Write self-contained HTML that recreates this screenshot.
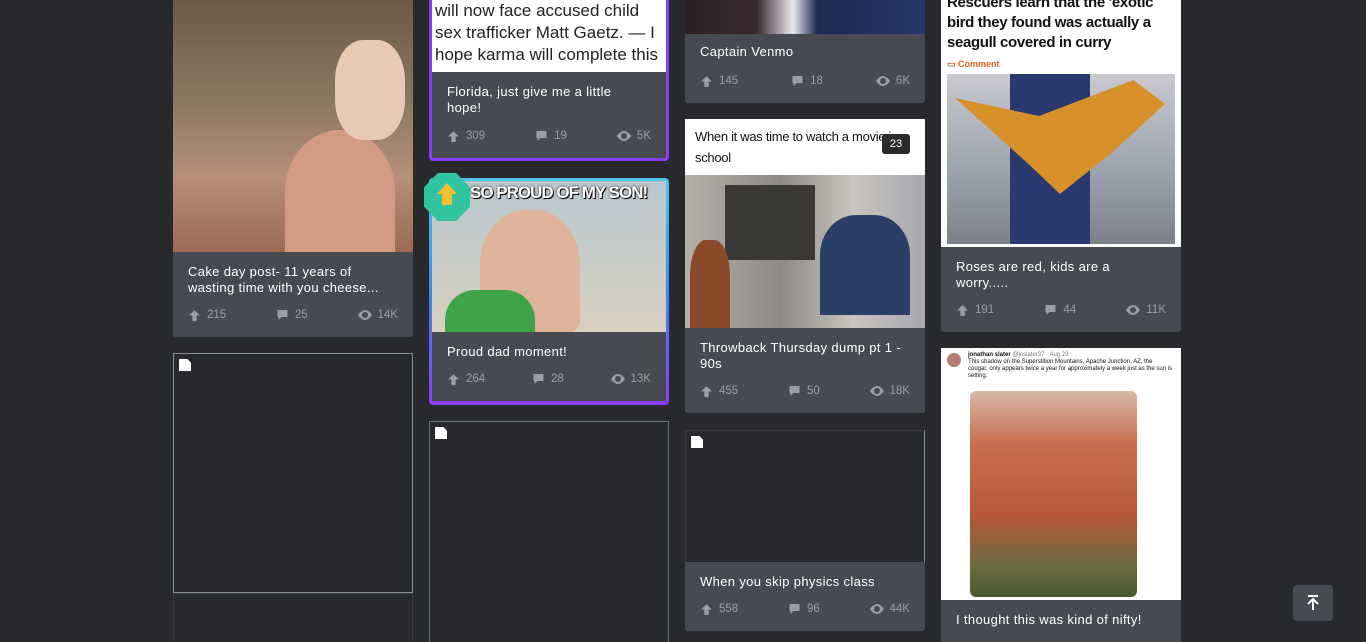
<!DOCTYPE html>
<html style="width:1366px;height:642px;overflow:hidden"><head><meta charset="utf-8"><style>
html,body{margin:0;width:1366px;height:642px;overflow:hidden}
body{background:#27292d;font-family:"Liberation Sans",sans-serif;position:relative}
.a{position:absolute}
.info{position:absolute;background:#474a51;color:#fff;font-size:13px;line-height:16px;box-sizing:border-box;padding:0 15px;letter-spacing:0.35px}
.info .t{position:absolute;left:15px;right:12px;top:12px}
.st{position:absolute;left:15px;right:15px;bottom:15px;height:14px;color:#9a9ea6;font-size:11.5px;display:flex;justify-content:space-between;align-items:center;letter-spacing:0}
.st span{display:flex;align-items:center;gap:6px}
.st svg{fill:#9a9ea6}
.br{position:absolute;box-sizing:border-box;border:1px solid #6c6f75;background:#27292d}
.bi{position:absolute;left:5px;top:5px;width:12px;height:12px;background:#fff;clip-path:polygon(0 0,70% 0,100% 30%,100% 100%,0 100%)}
</style></head><body>
<!-- col1 -->
<div class="a" style="left:173px;top:0;width:240px;height:252px;background:linear-gradient(180deg,#6b5a48 0%,#8a7862 40%,#b88f78 70%,#9a6a55 100%)"></div>
<div class="a" style="left:285px;top:130px;width:110px;height:122px;border-radius:50% 50% 0 0;background:#d39b84"></div>
<div class="a" style="left:335px;top:40px;width:70px;height:100px;background:#e8c9b4;border-radius:40%"></div>
<div class="info" style="left:173px;top:252px;width:240px;height:85px;border-radius:0 0 3px 3px"><div class="t">Cake day post- 11 years of wasting time with you cheese...</div>
<div class="st"><span><svg width="13" height="13" viewBox="0 0 12 12"><path d="M6 1L11 6H8V11H4V6H1Z"/></svg>215</span><span><svg width="13" height="12" viewBox="0 0 12 12"><path d="M1 1H11V8H5L2 11V8H1Z"/></svg>25</span><span><svg width="14" height="10" viewBox="0 0 14 10"><path d="M7 0C3 0 0 5 0 5S3 10 7 10 14 5 14 5 11 0 7 0ZM7 8A3 3 0 1 1 7 2 3 3 0 1 1 7 8Z"/></svg>14K</span></div></div>
<div class="br" style="left:173px;top:353px;width:240px;height:240px;border-color:#8a8d93"><div class="bi"></div></div>
<div class="br" style="left:173px;top:593px;width:240px;height:60px;border-color:#3a3c41"></div>
<!-- col2 -->
<div class="a" style="left:429px;top:-3px;width:240px;height:164px;box-sizing:border-box;border:3px solid #8c3cf5;border-radius:4px;background:#474a51"></div>
<div class="a" style="left:432px;top:0;width:234px;height:72px;background:#fff;color:#222;font-size:17px;line-height:22px;padding-left:3px;box-sizing:border-box">will now face accused child<br>sex trafficker Matt Gaetz. — I<br>hope karma will complete this</div>
<div class="info" style="left:432px;top:72px;width:234px;height:86px;background:transparent"><div class="t" style="top:12px;right:45px">Florida, just give me a little hope!</div>
<div class="st"><span><svg width="13" height="13" viewBox="0 0 12 12"><path d="M6 1L11 6H8V11H4V6H1Z"/></svg>309</span><span><svg width="13" height="12" viewBox="0 0 12 12"><path d="M1 1H11V8H5L2 11V8H1Z"/></svg>19</span><span><svg width="14" height="10" viewBox="0 0 14 10"><path d="M7 0C3 0 0 5 0 5S3 10 7 10 14 5 14 5 11 0 7 0ZM7 8A3 3 0 1 1 7 2 3 3 0 1 1 7 8Z"/></svg>5K</span></div></div>
<div class="a" style="left:429px;top:178px;width:240px;height:227px;border-radius:4px;background:linear-gradient(180deg,#4fc3e8,#3a8af0 50%,#8c3cf5)"></div>
<div class="a" style="left:432px;top:181px;width:234px;height:151px;background:linear-gradient(180deg,#b9c6cf 0%,#c8ccc8 50%,#d8d0c0 100%)"></div>
<div class="a" style="left:480px;top:210px;width:100px;height:122px;border-radius:45% 45% 10% 10%;background:#e0b49a"></div>
<div class="a" style="left:445px;top:290px;width:90px;height:42px;background:#3fa34a;border-radius:30px 30px 0 0"></div>
<div class="a" style="left:470px;top:183px;color:#fff;font-weight:bold;font-size:17px;letter-spacing:-1px;text-shadow:0 0 2px #000,1px 1px 0 #000">SO PROUD OF MY SON!</div>
<div class="a" style="left:424px;top:173px;width:46px;height:48px;background:#30c5a0;clip-path:polygon(30% 0,70% 0,100% 30%,100% 70%,70% 100%,30% 100%,0 70%,0 30%)"></div>
<div class="a" style="left:437px;top:183px;width:20px;height:22px;background:#f5c030;clip-path:polygon(50% 0,100% 50%,75% 50%,75% 100%,25% 100%,25% 50%,0 50%)"></div>
<div class="info" style="left:432px;top:332px;width:234px;height:69px"><div class="t">Proud dad moment!</div>
<div class="st"><span><svg width="13" height="13" viewBox="0 0 12 12"><path d="M6 1L11 6H8V11H4V6H1Z"/></svg>264</span><span><svg width="13" height="12" viewBox="0 0 12 12"><path d="M1 1H11V8H5L2 11V8H1Z"/></svg>28</span><span><svg width="14" height="10" viewBox="0 0 14 10"><path d="M7 0C3 0 0 5 0 5S3 10 7 10 14 5 14 5 11 0 7 0ZM7 8A3 3 0 1 1 7 2 3 3 0 1 1 7 8Z"/></svg>13K</span></div></div>
<div class="br" style="left:429px;top:421px;width:240px;height:240px"><div class="bi"></div></div>
<!-- col3 -->
<div class="a" style="left:685px;top:0;width:240px;height:34px;background:linear-gradient(90deg,#2a2024,#3b2a30 30%,#e8e8ee 45%,#1d2a50 55%,#263768)"></div>
<div class="info" style="left:685px;top:34px;width:240px;height:69px;border-radius:0 0 3px 3px"><div class="t" style="top:10px">Captain Venmo</div>
<div class="st"><span><svg width="13" height="13" viewBox="0 0 12 12"><path d="M6 1L11 6H8V11H4V6H1Z"/></svg>145</span><span><svg width="13" height="12" viewBox="0 0 12 12"><path d="M1 1H11V8H5L2 11V8H1Z"/></svg>18</span><span><svg width="14" height="10" viewBox="0 0 14 10"><path d="M7 0C3 0 0 5 0 5S3 10 7 10 14 5 14 5 11 0 7 0ZM7 8A3 3 0 1 1 7 2 3 3 0 1 1 7 8Z"/></svg>6K</span></div></div>
<div class="a" style="left:685px;top:119px;width:240px;height:56px;background:#fff;color:#111;font-size:13px;line-height:21px;padding:7px 10px;box-sizing:border-box;letter-spacing:-0.3px">When it was time to watch a movie in school</div>
<div class="a" style="left:882px;top:134px;width:28px;height:20px;background:#2b2b2b;color:#fff;font-size:11px;text-align:center;line-height:20px;border-radius:3px">23</div>
<div class="a" style="left:685px;top:175px;width:240px;height:153px;background:linear-gradient(90deg,#b5b0a8,#8c8a86 40%,#c9c4be 70%,#a7a9b0)"></div>
<div class="a" style="left:725px;top:185px;width:90px;height:75px;background:#3a3834"></div>
<div class="a" style="left:690px;top:240px;width:40px;height:88px;background:#8a4a2a;border-radius:40% 40% 0 0"></div>
<div class="a" style="left:820px;top:215px;width:90px;height:100px;background:#2b3f66;border-radius:40% 40% 0 0"></div>
<div class="info" style="left:685px;top:328px;width:240px;height:85px;border-radius:0 0 3px 3px"><div class="t">Throwback Thursday dump pt 1 - 90s</div>
<div class="st"><span><svg width="13" height="13" viewBox="0 0 12 12"><path d="M6 1L11 6H8V11H4V6H1Z"/></svg>455</span><span><svg width="13" height="12" viewBox="0 0 12 12"><path d="M1 1H11V8H5L2 11V8H1Z"/></svg>50</span><span><svg width="14" height="10" viewBox="0 0 14 10"><path d="M7 0C3 0 0 5 0 5S3 10 7 10 14 5 14 5 11 0 7 0ZM7 8A3 3 0 1 1 7 2 3 3 0 1 1 7 8Z"/></svg>18K</span></div></div>
<div class="br" style="left:685px;top:430px;width:240px;height:134px;border-color:#3a3c41;border-right-color:#8a8d93"><div class="bi"></div></div>
<div class="info" style="left:685px;top:562px;width:240px;height:69px;border-radius:0 0 3px 3px"><div class="t">When you skip physics class</div>
<div class="st"><span><svg width="13" height="13" viewBox="0 0 12 12"><path d="M6 1L11 6H8V11H4V6H1Z"/></svg>558</span><span><svg width="13" height="12" viewBox="0 0 12 12"><path d="M1 1H11V8H5L2 11V8H1Z"/></svg>96</span><span><svg width="14" height="10" viewBox="0 0 14 10"><path d="M7 0C3 0 0 5 0 5S3 10 7 10 14 5 14 5 11 0 7 0ZM7 8A3 3 0 1 1 7 2 3 3 0 1 1 7 8Z"/></svg>44K</span></div></div>
<!-- col4 -->
<div class="a" style="left:941px;top:0;width:240px;height:247px;background:#fff"></div>
<div class="a" style="left:947px;top:-7px;width:232px;color:#111;font-weight:bold;font-size:15px;line-height:20px;letter-spacing:-0.35px">Rescuers learn that the 'exotic bird they found was actually a seagull covered in curry</div>
<div class="a" style="left:947px;top:59px;color:#d9641e;font-size:9px;font-weight:bold">▭ Comment</div>
<div class="a" style="left:947px;top:74px;width:228px;height:170px;background:linear-gradient(180deg,#c9c9cf,#9aa1ad 60%,#7c8088)"></div>
<div class="a" style="left:1010px;top:74px;width:80px;height:170px;background:#2a3a6e"></div>
<div class="a" style="left:955px;top:80px;width:210px;height:120px;background:#d8902a;clip-path:polygon(0 15%,40% 30%,85% 0,100% 20%,75% 60%,50% 95%,35% 70%)"></div>
<div class="info" style="left:941px;top:247px;width:240px;height:85px;border-radius:0 0 3px 3px"><div class="t" style="right:70px">Roses are red, kids are a worry.....</div>
<div class="st"><span><svg width="13" height="13" viewBox="0 0 12 12"><path d="M6 1L11 6H8V11H4V6H1Z"/></svg>191</span><span><svg width="13" height="12" viewBox="0 0 12 12"><path d="M1 1H11V8H5L2 11V8H1Z"/></svg>44</span><span><svg width="14" height="10" viewBox="0 0 14 10"><path d="M7 0C3 0 0 5 0 5S3 10 7 10 14 5 14 5 11 0 7 0ZM7 8A3 3 0 1 1 7 2 3 3 0 1 1 7 8Z"/></svg>11K</span></div></div>
<div class="a" style="left:941px;top:348px;width:240px;height:252px;background:#fff"></div>
<div class="a" style="left:947px;top:353px;width:14px;height:14px;border-radius:50%;background:#b08070"></div>
<div class="a" style="left:968px;top:352px;font-size:6px;color:#111;width:205px;line-height:7px"><b>jonathan slater</b> <span style="color:#777">@joslater37 · Aug 23</span><br>This shadow on the Superstition Mountains, Apache Junction, AZ, the cougar, only appears twice a year for approximately a week just as the sun is setting.</div>
<div class="a" style="left:970px;top:391px;width:167px;height:206px;border-radius:6px;background:linear-gradient(180deg,#d8b8a8 0%,#c87050 25%,#b85838 60%,#6a6a40 85%,#4a5a30)"></div>
<div class="info" style="left:941px;top:600px;width:240px;height:42px"><div class="t">I thought this was kind of nifty!</div></div>
<div class="a" style="left:1293px;top:585px;width:40px;height:36px;background:#474a51;border-radius:4px"><svg width="40" height="36" viewBox="0 0 40 36"><path d="M15 11H25M20 25V15M15 19L20 14 25 19" stroke="#fff" stroke-width="2" fill="none"/></svg></div>
</body></html>
